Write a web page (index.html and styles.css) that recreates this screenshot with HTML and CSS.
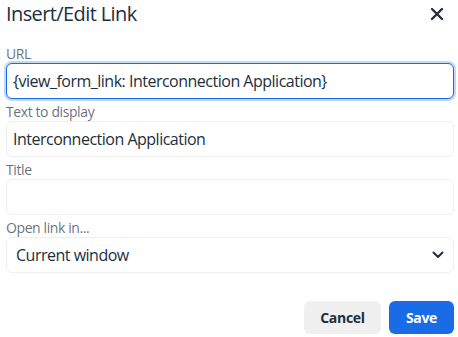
FILE: index.html
```html
<!DOCTYPE html>
<html lang="en">
<head>
  <meta charset="UTF-8" />
  <title>Insert/Edit Link</title>
  <link rel="stylesheet" href="styles.css">
</head>
<body>

  <div class="dialog">
    <div class="dialog-header">
      <h1>Insert/Edit Link</h1>
      <button class="close-btn" aria-label="Close">
        <svg width="14" height="14" viewBox="0 0 14 14">
          <path d="M2 2 L12 12 M12 2 L2 12" stroke="#222f3e" stroke-width="2.4" stroke-linecap="round"/>
        </svg>
      </button>
    </div>

    <div class="dialog-body">
      <div class="field">
        <label>URL</label>
        <input class="text-input focused" type="text" value="{view_form_link: Interconnection Application}">
      </div>

      <div class="field">
        <label>Text to display</label>
        <input class="text-input" type="text" value="Interconnection Application">
      </div>

      <div class="field">
        <label>Title</label>
        <input class="text-input" type="text" value="">
      </div>

      <div class="field">
        <label>Open link in...</label>
        <div class="select">
          <span>Current window</span>
          <svg width="12" height="8" viewBox="0 0 12 8">
            <path d="M1.5 1.5 L6 6 L10.5 1.5" fill="none" stroke="#222f3e" stroke-width="2" stroke-linecap="round" stroke-linejoin="round"/>
          </svg>
        </div>
      </div>
    </div>

    <div class="dialog-footer">
      <button class="btn btn-secondary">Cancel</button>
      <button class="btn btn-primary">Save</button>
    </div>
  </div>

</body>
</html>
```

FILE: styles.css
```css
body {
  margin: 0;
  background: #ffffff;
  font-family: 'Open Sans', 'Noto Sans', sans-serif;
  color: #222f3e;
}

.dialog {
  width: 458px;
  height: 337px;
  padding: 0 4px 0 6px;
  box-sizing: border-box;
  display: flex;
  flex-direction: column;
}

.dialog-header {
  display: flex;
  justify-content: space-between;
  align-items: center;
  height: 28px;
}

.dialog-header h1 {
  margin: 0;
  font-size: 20px;
  font-weight: 400;
  line-height: 26px;
  letter-spacing: -0.6px;
}

.close-btn {
  border: none;
  background: none;
  padding: 0;
  margin-right: 10px;
  display: flex;
  cursor: pointer;
}

.dialog-body {
  margin-top: 17px;
  display: flex;
  flex-direction: column;
  gap: 4px;
}

.field label {
  display: block;
  font-size: 14px;
  line-height: 18px;
  letter-spacing: -0.4px;
  color: rgba(34, 47, 62, 0.7);
}

.text-input,
.select {
  display: block;
  width: 100%;
  height: 36px;
  box-sizing: border-box;
  border: 1px solid #eeeeee;
  border-radius: 6px;
  padding: 5px 6px;
  font-family: inherit;
  font-size: 16px;
  letter-spacing: -0.5px;
  color: #222f3e;
  background: #ffffff;
  outline: none;
}

.text-input.focused {
  border-color: #1a6ce6;
  box-shadow: 0 0 0 2px rgba(0, 108, 231, 0.25);
}

.select {
  display: flex;
  align-items: center;
  justify-content: space-between;
  padding: 0 9px 0 9px;
}

.dialog-footer {
  margin-top: auto;
  margin-bottom: 3px;
  display: flex;
  justify-content: flex-end;
  gap: 8px;
}

.btn {
  height: 33px;
  padding: 0 16px;
  border: none;
  border-radius: 6px;
  font-family: inherit;
  font-size: 14px;
  font-weight: 700;
  letter-spacing: -0.3px;
  cursor: pointer;
}

.btn-secondary {
  width: 77px;
  background: #f0f0f0;
  color: #222f3e;
}

.btn-primary {
  width: 65px;
  background: #1a6ce6;
  color: #ffffff;
}
```
